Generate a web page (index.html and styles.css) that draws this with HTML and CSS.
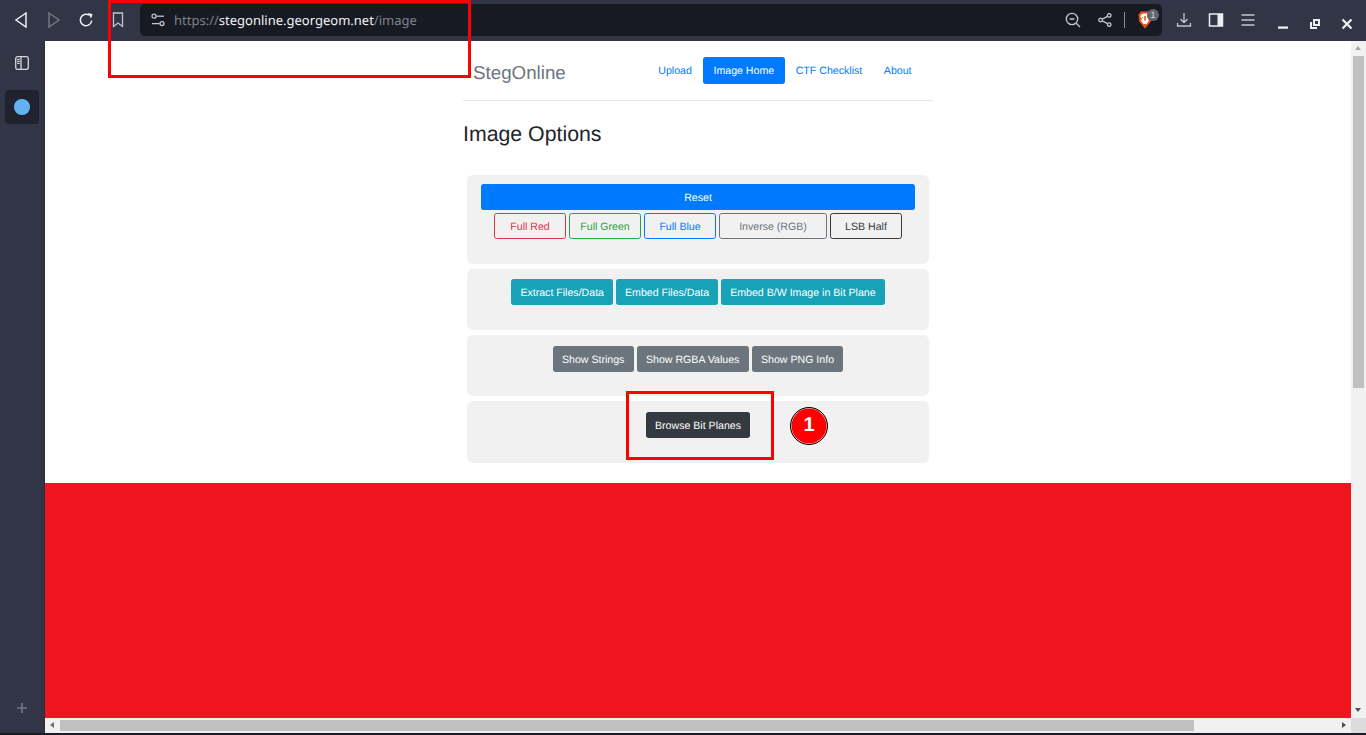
FILE: index.html
```html
<!DOCTYPE html>
<html lang="en">
<head>
<meta charset="utf-8">
<title>StegOnline</title>
<link rel="stylesheet" href="styles.css">
</head>
<body>
<div class="window">
  <header class="toolbar">
    <div class="tools nav-tools">
      <span class="tool"><svg width="16" height="16" viewBox="0 0 16 16"><path d="M12 1 L2 8 L12 15 Z" class="ln"/></svg></span>
      <span class="tool dim"><svg width="16" height="16" viewBox="0 0 16 16"><path d="M3 1 L13 8 L3 15 Z" class="ln"/></svg></span>
      <span class="tool"><svg width="16" height="16" viewBox="0 0 16 16"><path d="M13.7 8.6 A5.7 5.7 0 1 1 11.2 3.2" class="ln"/><path d="M10 .8 L14.6 2.2 L13 6.6 Z" fill="#eceef2"/></svg></span>
      <span class="tool"><svg width="16" height="16" viewBox="0 0 16 16"><path d="M3.5 1 H12.5 V14.5 L8 11 L3.5 14.5 Z" class="ln-g"/></svg></span>
    </div>
    <div class="urlbar">
      <svg class="tune" width="14" height="14" viewBox="0 0 14 14"><circle cx="3" cy="3.2" r="2" class="ln-g"/><path d="M5.5 3.2 H13" class="ln-g"/><circle cx="11" cy="10.6" r="2" class="ln-g"/><path d="M1 10.6 H8.5" class="ln-g"/></svg>
      <div class="url"><span class="url-dim">https://</span><span class="url-host">stegonline.georgeom.net</span><span class="url-dim">/image</span></div>
      <div class="url-actions">
        <svg class="ua-zoom" width="16" height="16" viewBox="0 0 16 16"><circle cx="7" cy="7" r="5.7" class="ln-g"/><path d="M4.6 7 H9.4 M11.2 11.2 L15 15" class="ln-g"/></svg>
        <svg class="ua-share" width="14" height="14" viewBox="0 0 14 14"><circle cx="2.6" cy="7" r="1.8" class="ln-g"/><circle cx="11.2" cy="2.4" r="1.8" class="ln-g"/><circle cx="11.2" cy="11.6" r="1.8" class="ln-g"/><path d="M4.2 6.1 L9.6 3.3 M4.2 7.9 L9.6 10.7" class="ln-g"/></svg>
        <span class="ua-sep"></span>
        <span class="brave">
          <svg width="14" height="18" viewBox="0 0 14 18"><path d="M3 .5 H11 L13.5 3.5 L12.8 10.5 L7 17.5 L1.2 10.5 L.5 3.5 Z" fill="#f1531f"/><path d="M3 3.5 L5.5 2.5 H8.5 L11 3.5 L11.5 6 L10 8 L11 9.5 L8.5 13 H5.5 L3 9.5 L4 8 L2.5 6 Z" fill="#fff"/><path d="M6.2 5 H7.8 V9.5 H6.2 Z M4 6 H5 V7 H4 Z M9 6 H10 V7 H9 Z" fill="#f1531f"/></svg>
          <span class="badge">1</span>
        </span>
      </div>
    </div>
    <div class="tools end-tools">
      <span class="tool"><svg width="16" height="16" viewBox="0 0 16 16"><path d="M8 1 V10 M4.5 7 L8 10.5 L11.5 7 M1.5 11 V14 H14.5 V11" class="ln-g"/></svg></span>
      <span class="tool"><svg width="16" height="16" viewBox="0 0 16 16"><rect x="1.5" y="2" width="13" height="12" class="ln"/><rect x="9.5" y="2" width="5" height="12" fill="#eceef2"/></svg></span>
      <span class="tool"><svg width="16" height="16" viewBox="0 0 16 16"><path d="M1.5 3 H14.5 M1.5 8 H14.5 M1.5 13 H14.5" class="ln-g"/></svg></span>
    </div>
    <div class="tools win-tools">
      <span class="tool"><svg width="12" height="12" viewBox="0 0 12 12"><path d="M1 9.6 H11" class="win"/></svg></span>
      <span class="tool"><svg width="12" height="12" viewBox="0 0 12 12"><path d="M4 1 H11 V8 H4 Z M6 3 V6 H9 V3 Z M1 4 H3 V9 H8 V11 H1 Z" fill="#eceef2" fill-rule="evenodd"/></svg></span>
      <span class="tool"><svg width="12" height="12" viewBox="0 0 12 12"><path d="M1.5 1.5 L10.5 10.5 M10.5 1.5 L1.5 10.5" class="win"/></svg></span>
    </div>
  </header>
  <div class="workspace">
    <aside class="sidebar">
      <div class="side-top">
        <span class="side-btn"><svg width="14" height="14" viewBox="0 0 14 14"><rect x=".7" y=".7" width="12.6" height="12.6" rx="2" class="ln-s"/><path d="M6 .7 V13.3" class="ln-s"/><path d="M2.2 3.4 H4.6 M2.2 5.4 H4.6 M2.2 7.4 H4.6" class="ln-s"/></svg></span>
        <span class="side-tab">
          <svg width="16" height="16" viewBox="0 0 16 16"><circle cx="8" cy="8" r="8" fill="#5cc0f5"/><circle cx="8" cy="8" r="6.4" fill="none" stroke="#6f9cf0" stroke-width=".8"/><circle cx="8" cy="8" r="4.6" fill="none" stroke="#6f9cf0" stroke-width=".8"/><circle cx="8" cy="8" r="2.8" fill="none" stroke="#6f9cf0" stroke-width=".8"/><circle cx="8" cy="8" r="1" fill="#6f9cf0"/></svg>
        </span>
      </div>
      <svg class="side-add" width="12" height="12" viewBox="0 0 12 12"><path d="M6 1 V11 M1 6 H11" stroke="#737686" stroke-width="1.6" fill="none"/></svg>
    </aside>
    <div class="viewport">
      <div class="viewport-row">
        <main class="page">
          <div class="container">
            <div class="site-header">
              <h3 class="brand">StegOnline</h3>
              <nav class="pills">
                <a class="pill">Upload</a>
                <a class="pill active">Image Home</a>
                <a class="pill">CTF Checklist</a>
                <a class="pill">About</a>
              </nav>
            </div>
            <h2 class="title">Image Options</h2>
            <section class="card card-a">
              <button class="btn btn-blue btn-wide">Reset</button>
              <div class="row">
                <button class="btn out out-red btn-72">Full Red</button>
                <button class="btn out out-green btn-72">Full Green</button>
                <button class="btn out out-blue btn-72">Full Blue</button>
                <button class="btn out out-grey">Inverse (RGB)</button>
                <button class="btn out out-dark btn-72">LSB Half</button>
              </div>
            </section>
            <section class="card card-b">
              <div class="row">
                <button class="btn btn-teal">Extract Files/Data</button>
                <button class="btn btn-teal">Embed Files/Data</button>
                <button class="btn btn-teal">Embed B/W Image in Bit Plane</button>
              </div>
            </section>
            <section class="card card-c">
              <div class="row">
                <button class="btn btn-grey">Show Strings</button>
                <button class="btn btn-grey">Show RGBA Values</button>
                <button class="btn btn-grey">Show PNG Info</button>
              </div>
            </section>
            <section class="card card-d">
              <div class="row">
                <button class="btn btn-dark">Browse Bit Planes</button>
              </div>
            </section>
          </div>
          <div class="red-band"></div>
        </main>
        <div class="vscroll">
          <span class="arrow arrow-up"></span>
          <span class="vthumb"></span>
          <span class="arrow arrow-down"></span>
        </div>
      </div>
      <div class="hscroll">
        <span class="arrow arrow-left"></span>
        <span class="hthumb"></span>
        <span class="arrow arrow-right"></span>
        <span class="corner"></span>
      </div>
    </div>
  </div>
  <div class="strip"></div>
  <div class="mark mark-url"></div>
  <div class="mark mark-btn"></div>
  <div class="step">1</div>
</div>
</body>
</html>
```
FILE: styles.css
```css
* { box-sizing: border-box; }
html, body { margin: 0; height: 100%; overflow: hidden; }
body { font-family: "Liberation Sans", Arial, sans-serif; background: #fff; text-rendering: geometricPrecision; }

.window { position: relative; width: 1366px; height: 735px; display: flex; flex-direction: column; overflow: hidden; }

/* shared svg strokes */
.ln { fill: none; stroke: #eceef2; stroke-width: 1.5; }
.ln-g { fill: none; stroke: #c3c5cc; stroke-width: 1.3; }
.ln-s { fill: none; stroke: #d4d6dc; stroke-width: 1.3; }
.win { fill: none; stroke: #eceef2; stroke-width: 2.3; }

/* browser toolbar */
.toolbar { height: 41px; flex: none; display: flex; align-items: flex-start; background: #323545; padding-right: 3px; }
.tools { display: flex; height: 40px; }
.nav-tools { margin-left: 6px; }
.end-tools { margin-left: 6px; }
.win-tools { margin: 4px 0 0 3px; }
.tool { width: 32px; height: 40px; display: flex; align-items: center; justify-content: center; }
.tool.dim { opacity: .35; }
.urlbar { flex: 1; margin: 4px 0 0 6px; height: 32px; background: #171a22; border-radius: 5px; display: flex; align-items: center; padding-left: 11px; }
.tune { flex: none; }
.url { margin-left: 9px; font: 13px/20px "Noto Sans", sans-serif; white-space: nowrap; }
.url-dim { color: #7f828c; }
.url-host { color: #f2f3f5; }
.url-actions { margin-left: auto; display: flex; align-items: center; padding-right: 0; }
.ua-zoom { margin-right: 17px; }
.ua-share { margin-right: 12px; }
.ua-sep { width: 1px; height: 16px; background: #8a8c94; margin-right: 13px; }
.brave { position: relative; display: flex; width: 24px; height: 18px; }
.badge { position: absolute; left: 9px; top: -2px; width: 12px; height: 12px; border-radius: 50%; background: #62646e; color: #d8d9de; font: 9px/12px "Liberation Sans", sans-serif; text-align: center; }

/* main area */
.workspace { flex: 1; min-height: 0; display: flex; }
.sidebar { width: 45px; flex: none; background: #323545; border-right: 1px solid #2a2c39; display: flex; flex-direction: column; justify-content: space-between; align-items: center; padding: 15px 0 19px; }
.side-top { display: flex; flex-direction: column; align-items: center; gap: 20px; }
.side-btn { display: flex; width: 14px; height: 14px; }
.side-tab { width: 34px; height: 34px; border-radius: 4px; background: #20222d; display: flex; align-items: center; justify-content: center; }
.side-add { flex: none; }

.viewport { flex: 1; min-width: 0; display: flex; flex-direction: column; }
.viewport-row { flex: 1; min-height: 0; display: flex; }
.page { flex: 1; min-width: 0; overflow: hidden; background: #fff; }
.container { width: 470px; margin: 0 auto; }

.site-header { display: flex; justify-content: space-between; align-items: flex-start; height: 60px; padding: 16px 10.7px 0 10px; border-bottom: 1px solid #e4e6e8; }
.brand { margin: 4px 0 0; font-size: 18.76px; font-weight: 400; line-height: 23px; color: #6c757d; }
.pills { display: flex; }
.pill { display: block; padding: 6px 10.8px 4px; font-size: 10.6px; line-height: 17px; color: #007bff; border-radius: 2.7px; }
.pill.active { background: #007bff; color: #fff; }

.title { margin: 20px 0 28px; font-size: 21.3px; font-weight: 400; line-height: 26px; color: #212529; }

.card { width: 462px; margin: 0 auto 5px; background: #f1f1f1; border-radius: 6px; display: flex; flex-direction: column; align-items: center; }
.card-a { height: 89px; padding-top: 9px; gap: 3px; }
.card-b { height: 61px; padding-top: 10px; }
.card-c { height: 61px; padding-top: 11px; }
.card-d { height: 62px; padding-top: 11px; margin-bottom: 20px; }

.row { display: flex; justify-content: center; gap: 3px; }
.btn { height: 26px; padding: 2px 8px 0; font: 10.6px/16px "Liberation Sans", Arial, sans-serif; text-rendering: geometricPrecision; border: 1px solid transparent; border-radius: 2.7px; color: #fff; background: none; white-space: nowrap; }
.btn-wide { width: 434px; }
.btn-72 { width: 72px; padding: 2px 0 0; }
.btn-blue { background: #007bff; }
.btn-teal { background: #17a2b8; }
.btn-grey { background: #6c757d; padding: 2px 8.3px 0; }
.btn-dark { background: #343a40; }
.out { background: transparent; }
.out-red { border-color: #dc3545; color: #dc3545; }
.out-green { border-color: #28a745; color: #28a745; }
.out-blue { border-color: #007bff; color: #007bff; }
.out-grey { border-color: #6c757d; color: #6c757d; width: 108px; padding: 2px 0 0; }
.out-dark { border-color: #343a40; color: #343a40; }

.red-band { height: 300px; background: #f0141e; }

/* scrollbars */
.vscroll { width: 15px; flex: none; position: relative; background: #f1f1f1; }
.vthumb { position: absolute; left: 2px; top: 15px; width: 11px; height: 332px; background: #c1c1c1; }
.hscroll { height: 15px; flex: none; position: relative; background: #f1f1f1; }
.hthumb { position: absolute; left: 15px; top: 2px; width: 1134px; height: 11px; background: #c1c1c1; }
.corner { position: absolute; right: 0; top: 0; width: 15px; height: 15px; background: #dcdcdc; }
.arrow { position: absolute; width: 0; height: 0; border-style: solid; border-color: transparent; }
.arrow-up { left: 4px; top: 5px; border-width: 0 3.5px 4px; border-bottom-color: #a3a3a3; }
.arrow-down { left: 4px; bottom: 6px; border-width: 4px 3.5px 0; border-top-color: #505050; }
.arrow-left { left: 5px; top: 4px; border-width: 3.5px 4px 3.5px 0; border-right-color: #6e6e6e; }
.arrow-right { right: 20px; top: 4px; border-width: 3.5px 0 3.5px 4px; border-left-color: #505050; }

.strip { height: 2px; flex: none; background: #1a1c24; }

/* annotations laid over the screenshot */
.mark { position: absolute; border: 3px solid #ff0000; }
.mark-url { left: 108px; top: 0; width: 363px; height: 78px; }
.mark-btn { left: 626px; top: 391px; width: 148px; height: 69px; }
.step { position: absolute; left: 790px; top: 407px; width: 38px; height: 38px; border-radius: 50%; background: #ff0000; border: 1.5px solid #000; box-shadow: inset 0 0 0 .5px #fff; color: #fff; font: 700 20px/35px "Liberation Sans", Arial, sans-serif; text-align: center; }
```
